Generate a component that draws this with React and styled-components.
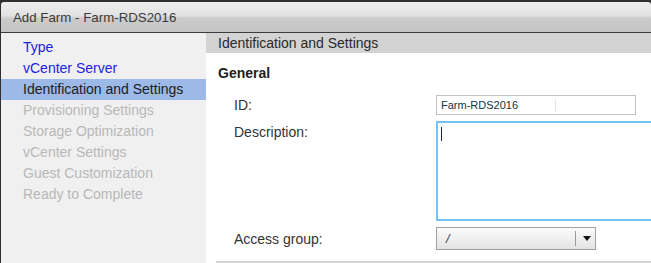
import styled, { createGlobalStyle } from "styled-components";

const Global = createGlobalStyle`
  html, body {
    margin: 0;
    padding: 0;
    width: 651px;
    height: 263px;
    overflow: hidden;
    background: #2f2f2f;
  }
  * { box-sizing: border-box; }
`;

const Frame = styled.div`
  width: 651px;
  height: 263px;
  padding: 2px 0 0 1px;
  background: #2f2f2f;
  font-family: "Liberation Sans", Arial, sans-serif;
  display: flex;
  flex-direction: column;
  overflow: hidden;
`;

const TitleBar = styled.div`
  height: 31px;
  flex-shrink: 0;
  display: flex;
  align-items: center;
  padding-left: 12px;
  border-radius: 3px 3px 0 0;
  border-bottom: 1px solid #3c3c3c;
  background: linear-gradient(#eeeeee 0%, #e2e2e2 45%, #cbcbcb 55%, #c4c4c4 100%);
  color: #3a3a3a;
  font-size: 13.3px;
`;

const Body = styled.div`
  flex: 1;
  display: flex;
  background: #fff;
  min-height: 0;
`;

const Nav = styled.ul`
  width: 205px;
  flex-shrink: 0;
  margin: 0;
  padding: 4px 0 0;
  list-style: none;
  background: #f0f0f0;
`;

const NavItem = styled.li`
  height: 21px;
  line-height: 21px;
  padding-left: 22px;
  font-size: 14px;
  white-space: nowrap;
  color: ${p => (p.$state === "link" ? "#2020e6" : p.$state === "active" ? "#1c1c1c" : "#b8b8b8")};
  background: ${p => (p.$state === "active" ? "#9cb9e8" : "transparent")};
`;

const Content = styled.div`
  flex: 1;
  display: flex;
  flex-direction: column;
  min-width: 0;
  overflow: hidden;
`;

const PanelHeader = styled.div`
  height: 20px;
  line-height: 20px;
  padding-left: 12px;
  background: #d3d3d3;
  color: #2a2a2a;
  font-size: 14px;
`;

const Section = styled.div`
  padding: 12px 0 0 12px;
`;

const SectionTitle = styled.div`
  font-size: 14px;
  font-weight: bold;
  color: #1e1e1e;
  height: 17px;
  line-height: 17px;
`;

const Form = styled.div`
  display: grid;
  grid-template-columns: 202px 240px;
  row-gap: 6px;
  padding: 13px 0 0 16px;
`;

const Label = styled.div`
  font-size: 14px;
  color: #333;
  padding-top: ${p => p.$top || 2}px;
`;

const TextInput = styled.div`
  width: 200px;
  height: 20px;
  border: 1px solid #c2c2c2;
  background: #fff;
  padding-left: 4px;
  font-size: 11px;
  line-height: 18px;
  color: #12343a;
  display: flex;
  align-items: center;
`;

const Cursor = styled.span`
  margin-left: 37px;
  width: 5px;
  height: 13px;
  border-left: 1px solid #e4e4e4;
`;

const TextArea = styled.div`
  width: 240px;
  height: 100px;
  border: 2px solid #74c3f6;
  background: #fff;
  padding: 4px 3px;
`;

const Caret = styled.span`
  display: block;
  width: 1px;
  height: 14px;
  background: #1a2a2a;
`;

const Select = styled.div`
  width: 160px;
  height: 23px;
  border: 1px solid #a0a0a0;
  background: linear-gradient(#fbfbfb, #e3e3e3);
  display: flex;
  align-items: center;
  font-size: 13px;
  color: #444;
`;

const SelectValue = styled.span`
  flex: 1;
  padding-left: 9px;
  font-style: italic;
`;

const SelectButton = styled.span`
  width: 20px;
  height: 15px;
  border-left: 1px solid #9a9a9a;
  display: flex;
  align-items: center;
  justify-content: center;
`;

const Arrow = styled.span`
  width: 0;
  height: 0;
  margin-left: 2px;
  border-left: 4px solid transparent;
  border-right: 4px solid transparent;
  border-top: 5px solid #111;
`;

const Divider = styled.div`
  margin: 11px 0 0 -2px;
  height: 2px;
  background: #d4d4d4;
`;

const steps = [
  ["Type", "link"],
  ["vCenter Server", "link"],
  ["Identification and Settings", "active"],
  ["Provisioning Settings", "off"],
  ["Storage Optimization", "off"],
  ["vCenter Settings", "off"],
  ["Guest Customization", "off"],
  ["Ready to Complete", "off"],
];

export default function App() {
  return (
    <>
      <Global />
      <Frame>
        <TitleBar>Add Farm - Farm-RDS2016</TitleBar>
        <Body>
          <Nav>
            {steps.map(([name, state]) => (
              <NavItem key={name} $state={state}>{name}</NavItem>
            ))}
          </Nav>
          <Content>
            <PanelHeader>Identification and Settings</PanelHeader>
            <Section>
              <SectionTitle>General</SectionTitle>
              <Form>
                <Label>ID:</Label>
                <TextInput>
                  Farm-RDS2016
                  <Cursor />
                </TextInput>
                <Label $top={3}>Description:</Label>
                <TextArea>
                  <Caret />
                </TextArea>
                <Label $top={4}>Access group:</Label>
                <Select>
                  <SelectValue>/</SelectValue>
                  <SelectButton>
                    <Arrow />
                  </SelectButton>
                </Select>
              </Form>
              <Divider />
            </Section>
          </Content>
        </Body>
      </Frame>
    </>
  );
}
